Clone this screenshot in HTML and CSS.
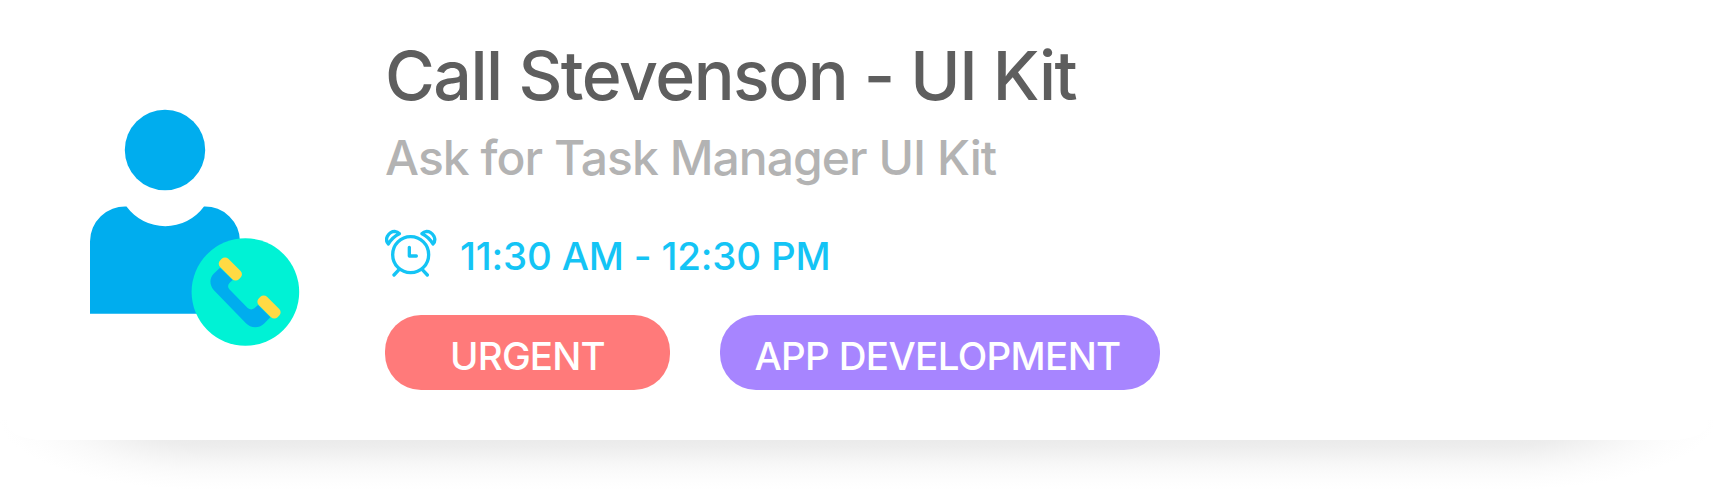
FILE: index.html
```html
<!DOCTYPE html>
<html lang="en">
<head>
<meta charset="utf-8">
<title>Task card</title>
<link rel="stylesheet" href="styles.css">
</head>
<body>
<main class="stage">
  <div class="shadow"></div>
  <article class="card">
    <svg class="avatar" viewBox="80 100 230 255" aria-hidden="true">
      <circle cx="165" cy="150" r="40.2" fill="#00adee"/>
      <path fill="#00adee" d="M90 313.7V241.5A35 35 0 0 1 126.5 206.5A48 48 0 0 0 204 206.5A35 35 0 0 1 240 241.5V313.7Z"/>
      <circle cx="245.4" cy="292" r="53.8" fill="#00f2d5"/>
      <g transform="translate(180 230) scale(.33333)">
        <path fill="#00adee" d="M120 113L101 131C88 144 88 165 101 180L197 279C212 295 236 296 252 281L271 262L234 225L223 235Q213 242 203 234L148 178Q140 168 149 158L158 150Z"/>
        <rect x="-40" y="-17.5" width="80" height="35" rx="14" fill="#ffda44" transform="translate(151 117) rotate(45)"/>
        <rect x="-40" y="-17.5" width="80" height="35" rx="14" fill="#ffda44" transform="translate(267 231) rotate(45)"/>
      </g>
    </svg>
    <div class="content">
      <h1 class="title">Call Stevenson - UI Kit</h1>
      <p class="subtitle">Ask for Task Manager UI Kit</p>
      <div class="time">
        <svg class="clock" viewBox="30 27 156 147" aria-hidden="true">
          <g fill="none" stroke="#14c4f5" stroke-width="10" stroke-linecap="round" stroke-linejoin="round">
            <circle cx="107" cy="104" r="54"/>
            <path d="M103 82V108H124M72 149L57 165M142 149L157 165"/>
            <path d="M40 72Q31 62 37 49Q46 34 59 34Q68 35 73 41Q52 51 40 72Z"/>
            <path d="M174 72Q183 62 177 49Q168 34 155 34Q146 35 141 41Q162 51 174 72Z"/>
          </g>
        </svg>
        <span class="hours">11:30 AM - 12:30 PM</span>
      </div>
      <div class="tags">
        <span class="tag tag-urgent">URGENT</span>
        <span class="tag tag-app">APP DEVELOPMENT</span>
      </div>
    </div>
  </article>
</main>
</body>
</html>
```
FILE: styles.css
```css
* { box-sizing: border-box; }
body {
  margin: 0;
  background: #fff;
  font-family: Inter, "Liberation Sans", sans-serif;
  font-weight: 500;
}
.stage {
  position: relative;
  height: 490px;
  padding: 0 7px;
  overflow: hidden;
}
/* Soft elliptical shadow under the card, darkest along its lower edge */
.shadow {
  --fade: #ebebeb 29%, #ededed 38%, #f2f2f2 50%, #f6f6f6 60%, #fafafa 72%, #fdfdfd 86%, #fff 100%;
  position: absolute;
  left: 0;
  right: 0;
  top: 420px;
  height: 70px;
  background:
    radial-gradient(210px 70px at 100% 0, var(--fade)) left / 210px 70px no-repeat,
    radial-gradient(210px 70px at 0 0, var(--fade)) right / 210px 70px no-repeat,
    linear-gradient(var(--fade)) center / calc(100% - 418px) 70px no-repeat;
}
.card {
  position: relative;
  display: flex;
  height: 440px;
  padding: 35px 0 0 73px;
  background: #fff;
  border-radius: 0 0 36px 36px / 0 0 16px 16px;
}
.avatar {
  flex: none;
  width: 230px;
  height: 255px;
  margin: 65px 75px 0 0;
}
.content { white-space: nowrap; }
.title {
  margin: 0;
  color: #5e5e5e;
  font-size: 68px;
  font-weight: 500;
  line-height: 80px;
  letter-spacing: -1.5px;
}
.subtitle {
  margin: 13px 0 0;
  color: #b3b3b3;
  font-size: 48px;
  line-height: 60px;
  letter-spacing: -0.96px;
}
.time {
  display: flex;
  height: 50px;
  margin-top: 41px;
  color: #14c4f5;
}
.clock {
  width: 52px;
  height: 49px;
}
.hours {
  padding: 2px 0 0 23px;
  font-size: 38.5px;
  line-height: 50px;
  letter-spacing: -0.2px;
}
.tags {
  display: flex;
  gap: 50px;
  margin-top: 36px;
}
.tag {
  height: 75px;
  padding-top: 4px;
  border-radius: 36px;
  color: #fff;
  font-size: 38.5px;
  line-height: 75px;
  letter-spacing: -0.8px;
  text-align: center;
}
.tag-urgent { width: 285px; }
.tag-urgent { background: #ff7a7a; }
.tag-app {
  width: 440px;
  padding-right: 5px;
  background: #a785ff;
  letter-spacing: -0.65px;
}
```
